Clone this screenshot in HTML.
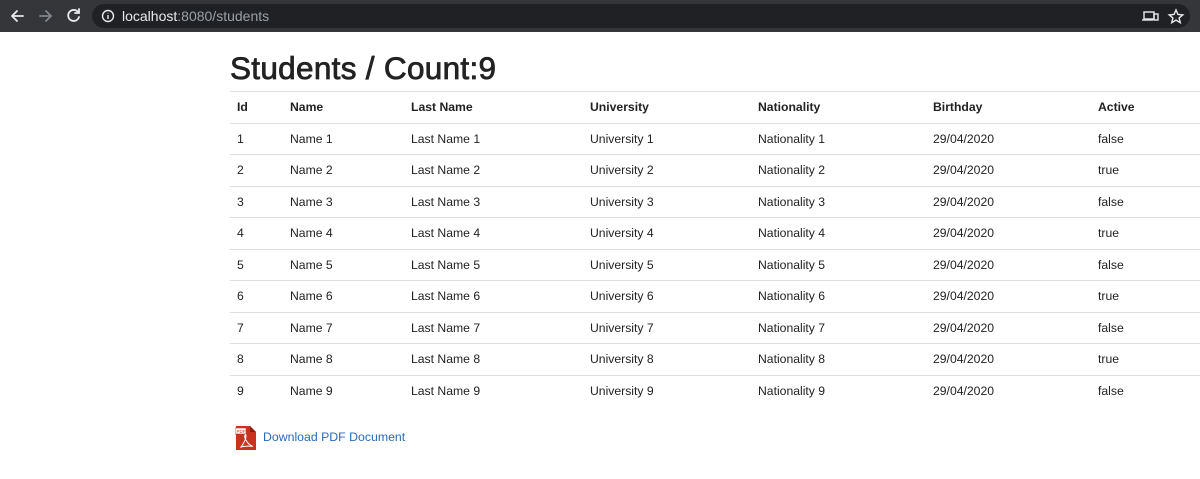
<!DOCTYPE html>
<html><head><style>
body{margin:0;width:1200px;height:479px;background:#fff;font-family:"Liberation Sans",Arial,sans-serif;overflow:hidden;position:relative}
.bar{position:absolute;left:0;top:0;width:1200px;height:32px;background:#35363a}
.url{position:absolute;left:92px;top:4px;width:1098px;height:24px;background:#202124;border-radius:12px}
.url span{position:absolute;left:30px;top:4px;font-size:14px;color:#e8eaed}
.url span i{font-style:normal;color:#9aa0a6}
h1{position:absolute;left:230px;top:50px;margin:0;font-size:31.5px;font-weight:normal;color:#222;-webkit-text-stroke:.8px #222;letter-spacing:.3px}
table{position:absolute;left:230px;top:91px;width:980px;border-collapse:collapse;font-size:12.2px;color:#222}
td,th{text-align:left;height:31.5px;padding:0 0 0 7px;border-top:1px solid #ddd;box-sizing:border-box}
th{font-weight:bold}
.pdf{position:absolute;left:235px;top:425px}
a{position:absolute;left:263px;top:430px;font-size:12.3px;color:#2a6ab8;text-decoration:none}
</style></head><body>
<div class="bar">
<svg width="90" height="32" style="position:absolute;left:0;top:0" fill="none" stroke-width="1.8" stroke-linecap="round">
<path d="M12 16h11M12 16l5-5M12 16l5 5" stroke="#e8eaed"/>
<path d="M40 16h11M51 16l-5-5M51 16l-5 5" stroke="#80868b"/>
<path d="M78 12a5.5 5.5 0 1 0 1 5" stroke="#e8eaed"/><path d="M79 9v4h-4" stroke="#e8eaed"/>
</svg>
<div class="url"><svg width="14" height="14" style="position:absolute;left:9px;top:5px"><circle cx="7" cy="7" r="5.5" stroke="#e8eaed" stroke-width="1.4" fill="none"/><path d="M7 6v4M7 4v.5" stroke="#e8eaed" stroke-width="1.4"/></svg><span>localhost<i>:8080/students</i></span></div>
<svg width="60" height="32" style="position:absolute;left:1138px;top:0" fill="none" stroke="#e8eaed" stroke-width="1.4"><rect x="6" y="12" width="10" height="7"/><rect x="16" y="14" width="4" height="6"/><path d="M4 20h11"/><path d="M38 10l2 4.5 4.8.4-3.7 3.1 1.2 4.7-4.3-2.6-4.3 2.6 1.2-4.7-3.7-3.1 4.8-.4z"/></svg>
</div>
<h1>Students / Count:9</h1>
<table>
<tr><th style="width:53px">Id</th><th style="width:121px">Name</th><th style="width:179px">Last Name</th><th style="width:168px">University</th><th style="width:175px">Nationality</th><th style="width:165px">Birthday</th><th>Active</th></tr>
<tr><td>1</td><td>Name 1</td><td>Last Name 1</td><td>University 1</td><td>Nationality 1</td><td>29/04/2020</td><td>false</td></tr>
<tr><td>2</td><td>Name 2</td><td>Last Name 2</td><td>University 2</td><td>Nationality 2</td><td>29/04/2020</td><td>true</td></tr>
<tr><td>3</td><td>Name 3</td><td>Last Name 3</td><td>University 3</td><td>Nationality 3</td><td>29/04/2020</td><td>false</td></tr>
<tr><td>4</td><td>Name 4</td><td>Last Name 4</td><td>University 4</td><td>Nationality 4</td><td>29/04/2020</td><td>true</td></tr>
<tr><td>5</td><td>Name 5</td><td>Last Name 5</td><td>University 5</td><td>Nationality 5</td><td>29/04/2020</td><td>false</td></tr>
<tr><td>6</td><td>Name 6</td><td>Last Name 6</td><td>University 6</td><td>Nationality 6</td><td>29/04/2020</td><td>true</td></tr>
<tr><td>7</td><td>Name 7</td><td>Last Name 7</td><td>University 7</td><td>Nationality 7</td><td>29/04/2020</td><td>false</td></tr>
<tr><td>8</td><td>Name 8</td><td>Last Name 8</td><td>University 8</td><td>Nationality 8</td><td>29/04/2020</td><td>true</td></tr>
<tr><td>9</td><td>Name 9</td><td>Last Name 9</td><td>University 9</td><td>Nationality 9</td><td>29/04/2020</td><td>false</td></tr>
</table>
<svg class="pdf" width="22" height="26"><path d="M1 1h14l6 6v18H1z" fill="#c8321e"/><path d="M15 1v6h6" fill="#8e1e10"/><rect x="0" y="3" width="11" height="6" fill="#fff" stroke="#c8321e" stroke-width=".6"/><text x="1.5" y="8" font-size="4.5" fill="#c8321e" font-family="Liberation Sans">PDF</text><path d="M6 22c3-4 5-8 5-11s-2-1-1 2 4 7 7 8-5-1-11 1z" fill="none" stroke="#fff" stroke-width="1"/></svg>
<a>Download PDF Document</a>
</body></html>
